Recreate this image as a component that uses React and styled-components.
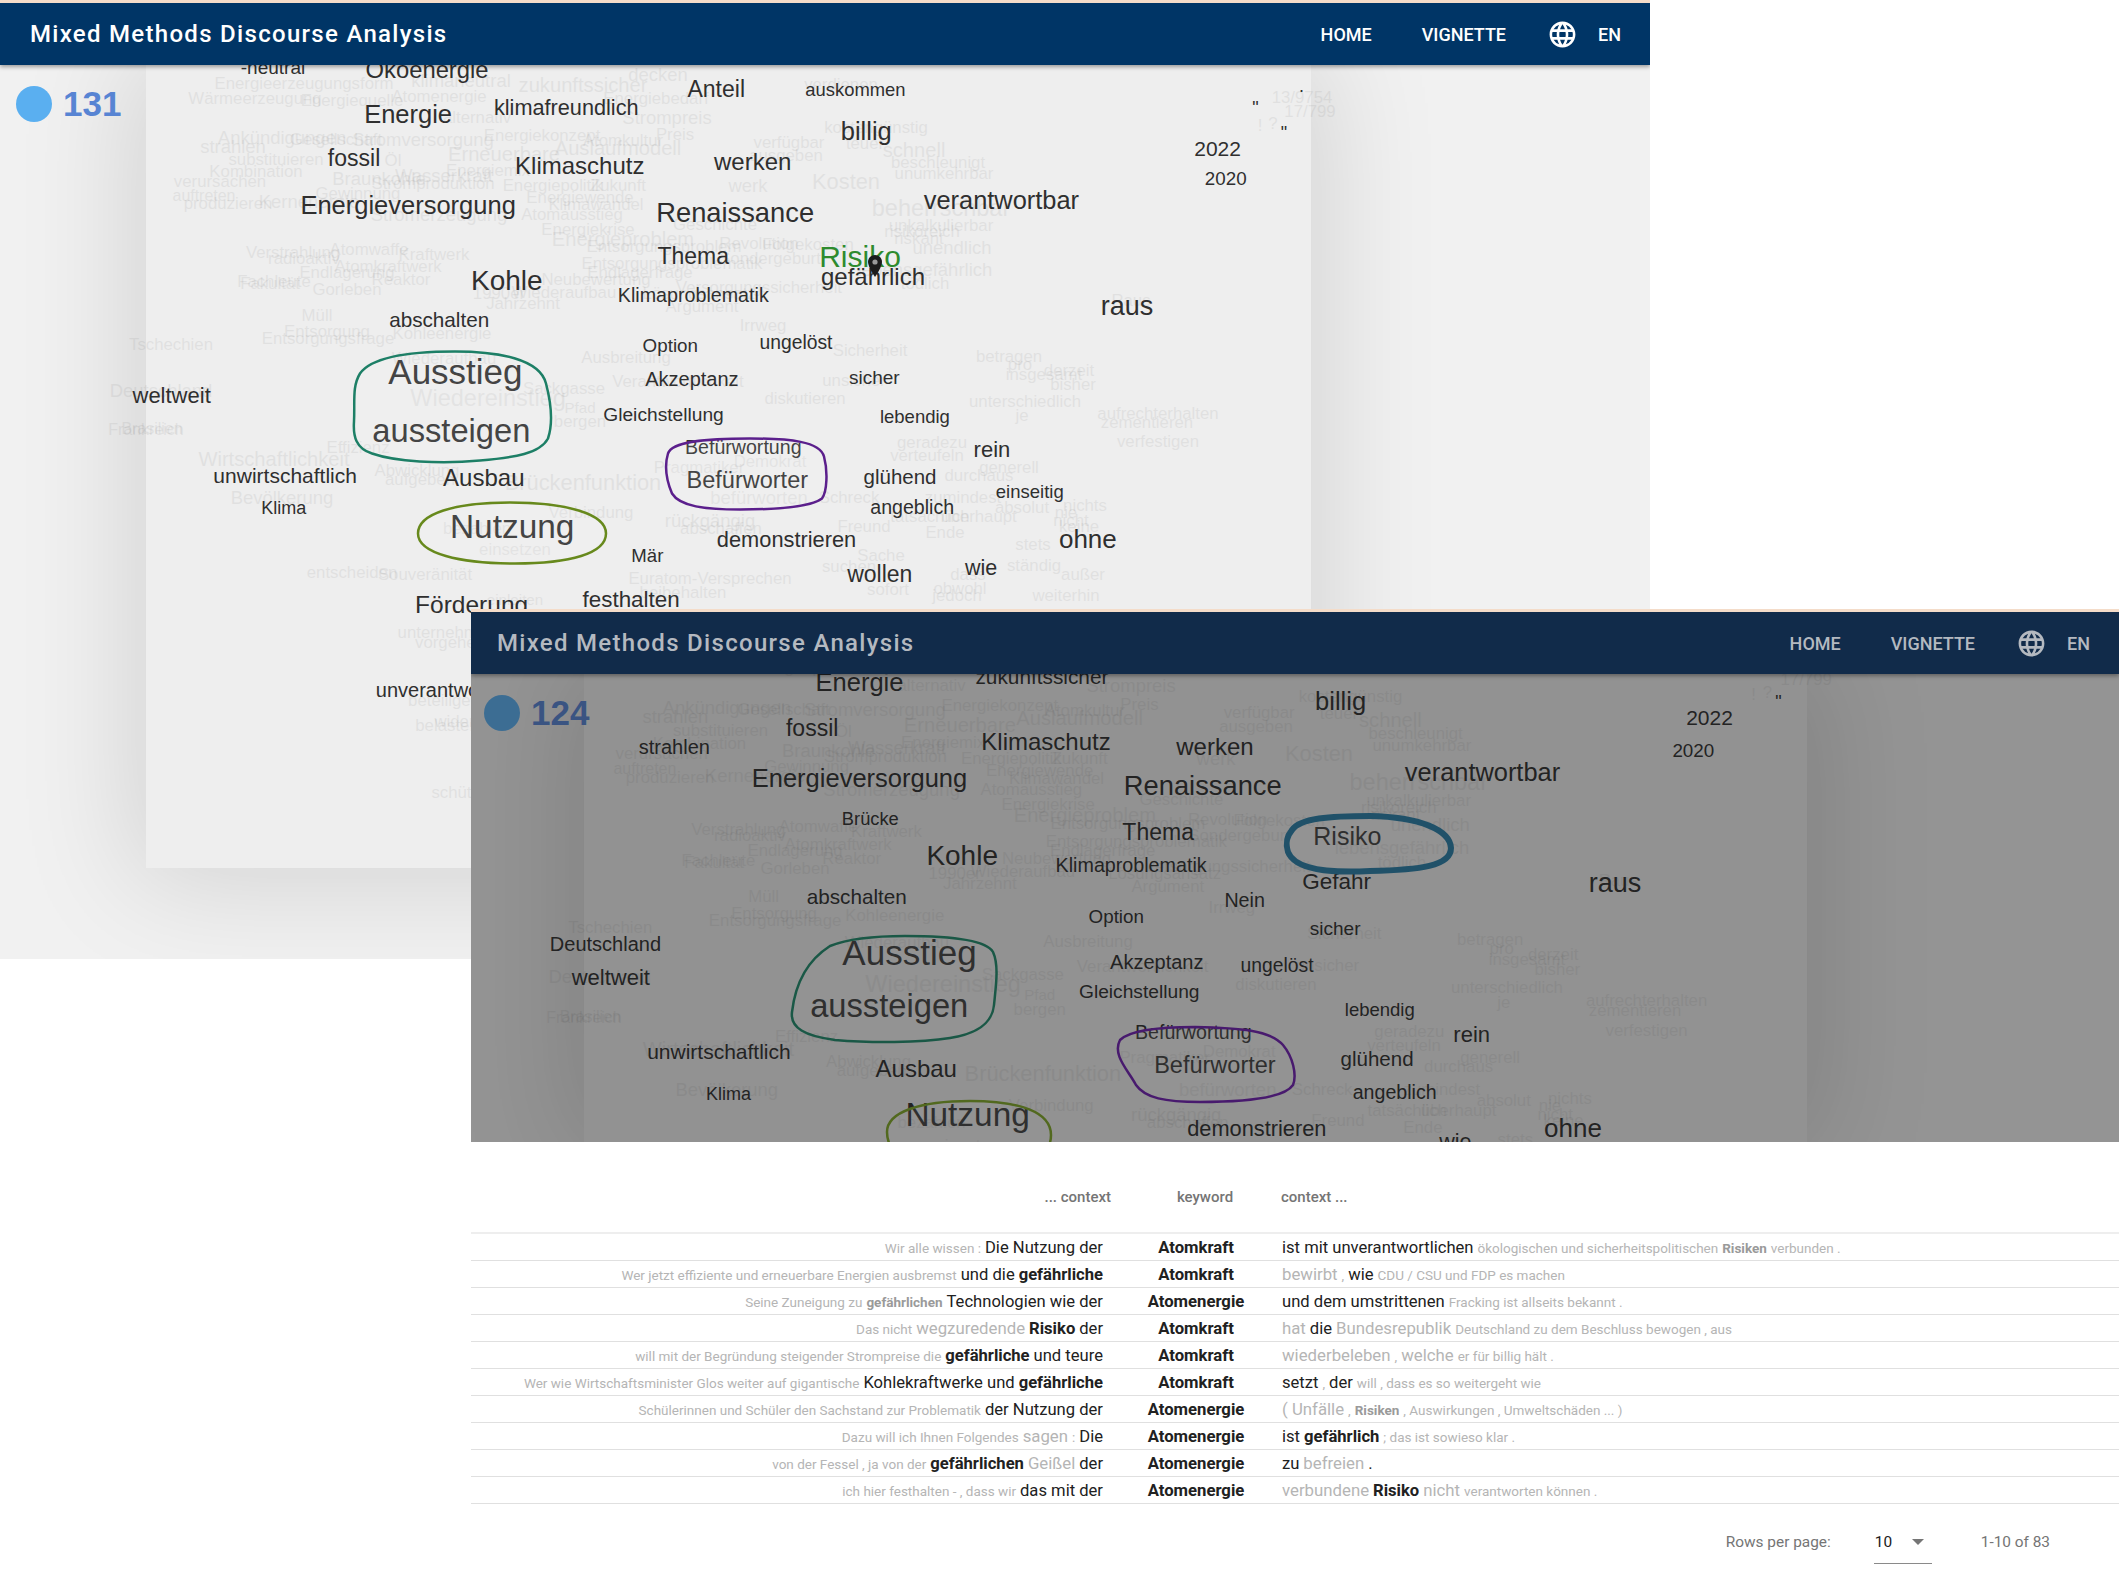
import React from 'react';
import styled, { createGlobalStyle } from 'styled-components';
import { MdLanguage } from 'react-icons/md';

// cloud words were measured on the shrunk screenshot, this brings them back to page pixels
const REF = 2119 / 1568;

const SIZES = {
  '-neutral': 19, Ökoenergie: 23.8, Energie: 25.5, klimafreundlich: 21.7, Anteil: 23, auskommen: 18.4,
  billig: 25.5, fossil: 23, Klimaschutz: 24, werken: 24, Energieversorgung: 25.5, Renaissance: 27.3,
  verantwortbar: 25.4, Thema: 23, Risiko: 25, gefährlich: 24, Klimaproblematik: 19.7, Kohle: 28, raus: 27,
  abschalten: 20.7, Option: 18.8, ungelöst: 19.3, Akzeptanz: 20, sicher: 19, Gleichstellung: 19.2,
  lebendig: 18.5, rein: 22, weltweit: 22, unwirtschaftlich: 21, Ausbau: 24, Klima: 18, Befürwortung: 19.6,
  Befürworter: 23.5, glühend: 20.5, einseitig: 18.5, angeblich: 19.6, demonstrieren: 21.8, ohne: 26,
  wollen: 23, wie: 21.5, Mär: 18.6, Förderung: 24.5, festhalten: 22.4, unverantwortlich: 20, 2022: 21,
  2020: 18.8, Ausstieg: 35, aussteigen: 32.7, Nutzung: 33.4, strahlen: 20, Brücke: 18.3, Gefahr: 22.5,
  Nein: 19.7, Deutschland: 20, zukunftssicher: 20.8, '"': 18, '.': 18,
};

const FRONT_WORDS = [
  ['-neutral', 202, 49], ['Ökoenergie', 316, 51], ['Energie', 302, 84], ['klimafreundlich', 419, 79],
  ['Anteil', 530, 65], ['auskommen', 633, 66], ['billig', 641, 97], ['fossil', 262, 116],
  ['Klimaschutz', 429, 122], ['werken', 557, 119], ['Energieversorgung', 302, 152], ['Renaissance', 544, 157],
  ['verantwortbar', 741, 148], ['Thema', 513, 189], ['gefährlich', 646, 204], ['Klimaproblematik', 513, 218],
  ['Kohle', 375, 207], ['raus', 834, 226], ['abschalten', 325, 236], ['Option', 496, 255], ['ungelöst', 589, 253],
  ['Akzeptanz', 512, 280], ['sicher', 647, 278], ['Gleichstellung', 491, 306], ['lebendig', 677, 308],
  ['rein', 734, 332], ['weltweit', 127, 292], ['unwirtschaftlich', 211, 351], ['Ausbau', 358, 353],
  ['Klima', 210, 375], ['Ausstieg', 337, 274], ['aussteigen', 334, 318], ['Nutzung', 379, 389],
  ['Befürwortung', 550, 331], ['Befürworter', 553, 355], ['glühend', 666, 352], ['einseitig', 762, 363],
  ['angeblich', 675, 375], ['demonstrieren', 582, 399], ['ohne', 805, 398], ['wollen', 651, 424], ['wie', 726, 420],
  ['Mär', 479, 411], ['Förderung', 349, 447], ['festhalten', 467, 443], ['unverantwortlich', 332, 510],
  ['2022', 901, 109], ['2020', 907, 132], ['"', 929, 79], ['"', 950, 98], ['.', 963, 63],
];

const BACK_WORDS = [
  ['Energie', 636, 505], ['zukunftssicher', 771, 500], ['billig', 992, 519], ['2022', 1265, 530], ['2020', 1253, 555],
  ['"', 1316, 519], ['strahlen', 499, 552], ['fossil', 601, 538], ['Klimaschutz', 774, 548], ['werken', 899, 552],
  ['Renaissance', 890, 581], ['verantwortbar', 1097, 571], ['Energieversorgung', 636, 576], ['Brücke', 644, 605],
  ['Thema', 857, 615], ['Risiko', 997, 618], ['Kohle', 712, 633], ['Klimaproblematik', 837, 640], ['Gefahr', 989, 652],
  ['raus', 1195, 653], ['abschalten', 634, 663], ['Nein', 921, 666], ['Option', 826, 678], ['sicher', 988, 686],
  ['Deutschland', 448, 698], ['Ausstieg', 673, 704], ['Akzeptanz', 856, 711], ['ungelöst', 945, 714],
  ['weltweit', 452, 723], ['Gleichstellung', 843, 733], ['aussteigen', 658, 744], ['lebendig', 1021, 747],
  ['Befürwortung', 883, 764], ['rein', 1089, 765], ['unwirtschaftlich', 532, 777], ['glühend', 1019, 783],
  ['Befürworter', 899, 788], ['Ausbau', 678, 790], ['angeblich', 1032, 808], ['Klima', 539, 809], ['Nutzung', 716, 824],
  ['demonstrieren', 930, 835], ['ohne', 1164, 834], ['wie', 1077, 845],
];

// faded words, in page pixels of the front window
const FADED = [
  ['Energieerzeugungsform', 304, 84, 20], ['klimaneutral', 461, 81, 22], ['zukunftssicher', 583, 85, 24], ['decken', 658, 75, 22],
  ['Wärmeerzeugung', 255, 99, 20], ['Energiequelle', 352, 101, 20], ['Atomenergie', 439, 97, 20], ['Energiebedarf', 656, 99, 20],
  ['Strompreis', 667, 118, 22], ['alternativ', 477, 118, 20], ['Preis', 675, 135, 20], ['Energiekonzept', 542, 136, 20],
  ['Ankündigungen', 282, 138, 22], ['Gesellschaft', 336, 140, 20], ['Stromversorgung', 423, 140, 22], ['strahlen', 233, 147, 22],
  ['Auslaufmodell', 618, 148, 24], ['Erneuerbare', 504, 154, 24], ['Atomkultur', 623, 141, 20], ['substituieren', 276, 160, 20],
  ['verfügbar', 789, 143, 20], ['ausgeben', 786, 156, 20], ['Öl', 393, 161, 20], ['Kombination', 256, 172, 20],
  ['Braunkohle', 379, 179, 22], ['Wasserkraft', 444, 176, 22], ['Energiemix', 488, 171, 20], ['verursachen', 220, 182, 20],
  ['Stromproduktion', 433, 184, 20], ['Energiepolitik', 553, 186, 20], ['Zukunft', 618, 186, 20], ['werk', 748, 186, 22],
  ['Kosten', 846, 182, 26], ['auftreten', 204, 196, 19], ['Gewinnung', 358, 194, 20], ['Energiewende', 580, 198, 20],
  ['produzieren', 228, 204, 20], ['Kernenergie', 309, 202, 22], ['Klimawandel', 596, 205, 20], ['Atomausstieg', 572, 215, 20],
  ['Stromerzeugung', 439, 215, 22], ['Geschichte', 715, 225, 20], ['Energiekrise', 588, 230, 20], ['Energieproblem', 623, 239, 24],
  ['Entsorgungsproblem', 664, 247, 20], ['Revolution', 759, 244, 20], ['Folgekosten', 808, 245, 20], ['Verstrahlung', 293, 253, 20],
  ['Atomwaffe', 369, 250, 20], ['radioaktiv', 304, 259, 20], ['Kraftwerk', 434, 255, 20], ['Atomkraftwerk', 388, 267, 20],
  ['Entsorgungsproblematik', 672, 264, 20], ['Sondergeburt', 770, 259, 20], ['Endlagerung', 347, 273, 20], ['Reaktor', 401, 280, 20],
  ['Fachleute', 274, 282, 20], ['Fakultät', 270, 284, 20], ['Neubewertung', 596, 280, 20], ['Endlagerfrage', 640, 273, 20],
  ['Versorgungssicherheit', 759, 288, 20], ['Wiederaufbau', 564, 293, 20], ['1990er', 499, 294, 20], ['Lösungsansatz', 699, 294, 20],
  ['Gorleben', 347, 290, 20], ['Argument', 702, 307, 20], ['Jahrzehnt', 523, 304, 20], ['Müll', 317, 316, 20], ['Irrweg', 763, 326, 20],
  ['Entsorgung', 327, 332, 20], ['Entsorgungsfrage', 328, 339, 20], ['Kohleenergie', 442, 334, 20], ['Tschechien', 171, 345, 20],
  ['Sicherheit', 870, 351, 20], ['Ausbreitung', 626, 358, 20], ['Wiederaufbau', 444, 359, 20], ['Sackgasse', 564, 389, 20],
  ['Deutschland', 161, 391, 22], ['Verantwortlichkeit', 678, 382, 20], ['Wiedereinstieg', 488, 399, 28], ['diskutieren', 805, 399, 20],
  ['Brasilien', 152, 429, 19], ['Frankreich', 146, 430, 19], ['Pfad', 580, 408, 18], ['bergen', 580, 422, 20], ['Wirtschaftlichkeit', 274, 459, 24],
  ['Effizienz', 358, 448, 20], ['Abwicklung', 417, 471, 20], ['aufgeben', 420, 480, 20], ['Brückenfunktion', 583, 483, 26],
  ['Pragmatiker', 699, 468, 20], ['Bevölkerung', 282, 498, 22], ['Demokrat', 770, 462, 20], ['befürworten', 759, 498, 22],
  ['Verbindung', 591, 513, 20], ['rückgängig', 710, 521, 22], ['abschaffen', 721, 529, 20], ['bezahlen', 477, 529, 20],
  ['einsetzen', 515, 550, 20], ['entscheiden', 352, 573, 20], ['Souveränität', 425, 575, 20], ['Euratom-Versprechen', 710, 579, 20],
  ['beibehalten', 683, 593, 20], ['einleiten', 515, 600, 18],
  ['verdienen', 841, 85, 20], ['kostengünstig', 876, 128, 20], ['teuer', 865, 144, 20], ['schnell', 914, 150, 24], ['beschleunigt', 938, 163, 20],
  ['unumkehrbar', 944, 174, 20], ['beherrschbar', 941, 209, 28], ['unkalkulierbar', 941, 226, 20], ['risikoreich', 922, 232, 20],
  ['riskant', 919, 239, 20], ['unendlich', 952, 248, 22], ['lebensgefährlich', 925, 270, 22], ['tödlich', 925, 284, 20], ['Raus', 1131, 301, 20],
  ['betragen', 1009, 357, 20], ['pro', 1020, 365, 20], ['insgesamt', 1044, 375, 20], ['derzeit', 1069, 371, 20], ['bisher', 1073, 385, 20],
  ['unsicher', 854, 381, 20], ['unterschiedlich', 1025, 402, 20], ['je', 1022, 416, 20], ['aufrechterhalten', 1158, 414, 20],
  ['zementieren', 1147, 423, 20], ['verfestigen', 1158, 442, 20], ['geradezu', 932, 443, 20], ['verteufeln', 927, 456, 20], ['generell', 1009, 468, 20],
  ['durchaus', 979, 476, 20], ['zumindest', 963, 498, 20], ['absolut', 1022, 508, 20], ['nichts', 1085, 506, 20], ['nie', 1066, 513, 20],
  ['überhaupt', 979, 517, 20], ['tatsächlich', 930, 517, 20], ['nicht', 1071, 521, 20], ['keine', 1079, 527, 20], ['Freund', 864, 527, 20],
  ['Ende', 945, 533, 20], ['stets', 1033, 545, 20], ['Sache', 881, 556, 20], ['ständig', 1034, 566, 20], ['außer', 1083, 575, 20], ['suchen', 849, 567, 20],
  ['dass', 968, 575, 20], ['sofort', 888, 590, 20], ['obwohl', 960, 589, 20], ['jedoch', 957, 596, 20], ['weiterhin', 1066, 596, 20],
  ['Schreck', 849, 498, 20], ['13/9754', 1302, 98, 20], ['17/799', 1310, 112, 20], ['!', 1260, 126, 20], ['?', 1273, 124, 20],
  ['unternehmen', 447, 633, 20], ['vorgehen', 450, 643, 20], ['beteiligen', 444, 701, 20], ['belasten', 447, 726, 20], ['widerlegen', 475, 722, 20], ['schützen', 465, 793, 20],
];

const FRONT_RINGS = [
  { color: '#1d7f66', width: 2.5, d: 'M360 372C372 355 410 350 455 350C500 350 540 358 546 382C552 405 552 425 548 437C540 452 515 456 480 459C440 463 395 460 372 452C356 447 353 435 354 420C355 400 352 385 360 372Z' },
  { color: '#67891c', width: 2.5, d: 'M418 532C418 512 455 501 510 501C565 501 606 512 606 532C606 552 570 562 515 562C460 562 418 552 418 532Z' },
  { color: '#5b1f8c', width: 2.5, d: 'M668 452C672 440 705 437 750 437C790 437 820 440 824 455C828 470 827 490 822 497C810 506 775 508 740 508C705 508 680 505 672 492C667 480 664 465 668 452Z' },
];

const BACK_RINGS = [
  { color: '#1f8a6c', width: 2.5, d: 'M830 946C850 938 880 936 905 936C940 936 985 938 993 952C999 965 996 985 994 1005C992 1025 975 1034 950 1038C920 1043 870 1043 835 1040C805 1036 790 1028 792 1012C794 995 800 965 830 946Z' },
  { color: '#6f1fb0', width: 2.5, d: 'M1120 1040C1130 1030 1160 1027 1195 1027C1240 1028 1270 1030 1283 1045C1293 1057 1297 1075 1293 1085C1285 1097 1250 1102 1200 1102C1165 1102 1145 1098 1136 1085C1128 1070 1112 1055 1120 1040Z' },
  { color: '#80a828', width: 2.5, d: 'M887 1132C887 1112 920 1101 970 1101C1020 1101 1051 1112 1051 1135C1051 1160 1020 1170 970 1170C920 1170 887 1160 887 1132Z' },
  { color: '#2a7fa8', width: 6, d: 'M1292 830C1300 818 1330 816 1370 816C1420 817 1450 830 1451 848C1451 866 1420 870 1370 871C1330 873 1295 870 1288 852C1285 842 1287 836 1292 830Z' },
];

// s small grey, sb small bold grey, g large grey, d dark, b bold dark
const ROWS = [
  { left: [['s', 'Wir alle wissen :'], ['d', 'Die Nutzung der']], key: 'Atomkraft', right: [['d', 'ist mit unverantwortlichen'], ['s', 'ökologischen und sicherheitspolitischen'], ['sb', 'Risiken'], ['s', 'verbunden .']] },
  { left: [['s', 'Wer jetzt effiziente und erneuerbare Energien ausbremst'], ['d', 'und die'], ['b', 'gefährliche']], key: 'Atomkraft', right: [['g', 'bewirbt'], ['s', ','], ['d', 'wie'], ['s', 'CDU / CSU und FDP es machen']] },
  { left: [['s', 'Seine Zuneigung zu'], ['sb', 'gefährlichen'], ['d', 'Technologien wie der']], key: 'Atomenergie', right: [['d', 'und dem umstrittenen'], ['s', 'Fracking ist allseits bekannt .']] },
  { left: [['s', 'Das nicht'], ['g', 'wegzuredende'], ['b', 'Risiko'], ['d', 'der']], key: 'Atomkraft', right: [['g', 'hat'], ['d', 'die'], ['g', 'Bundesrepublik'], ['s', 'Deutschland zu dem Beschluss bewogen , aus']] },
  { left: [['s', 'will mit der Begründung steigender Strompreise die'], ['b', 'gefährliche'], ['d', 'und teure']], key: 'Atomkraft', right: [['g', 'wiederbeleben'], ['s', ','], ['g', 'welche'], ['s', 'er für billig hält .']] },
  { left: [['s', 'Wer wie Wirtschaftsminister Glos weiter auf gigantische'], ['d', 'Kohlekraftwerke und'], ['b', 'gefährliche']], key: 'Atomkraft', right: [['d', 'setzt'], ['s', ','], ['d', 'der'], ['s', 'will , dass es so weitergeht wie']] },
  { left: [['s', 'Schülerinnen und Schüler den Sachstand zur Problematik'], ['d', 'der Nutzung der']], key: 'Atomenergie', right: [['g', '( Unfälle'], ['s', ','], ['sb', 'Risiken'], ['s', ', Auswirkungen , Umweltschäden ... )']] },
  { left: [['s', 'Dazu will ich Ihnen Folgendes'], ['g', 'sagen'], ['s', ':'], ['d', 'Die']], key: 'Atomenergie', right: [['d', 'ist'], ['b', 'gefährlich'], ['s', '; das ist sowieso klar .']] },
  { left: [['s', 'von der Fessel , ja von der'], ['b', 'gefährlichen'], ['g', 'Geißel'], ['d', 'der']], key: 'Atomenergie', right: [['d', 'zu'], ['g', 'befreien'], ['d', '.']] },
  { left: [['s', 'ich hier festhalten - , dass wir'], ['d', 'das mit der']], key: 'Atomenergie', right: [['g', 'verbundene'], ['b', 'Risiko'], ['g', 'nicht'], ['s', 'verantworten können .']] },
];

const GlobalStyle = createGlobalStyle`
  html, body { margin: 0; padding: 0; background: #fff; }
  #root { position: relative; width: 2119px; height: 1584px; overflow: hidden; font-family: Roboto, sans-serif; }
`;

const Win = styled.section`
  position: absolute;
  left: ${p => p.$left}px;
  top: ${p => p.$top}px;
  width: ${p => p.$width}px;
  height: ${p => p.$height}px;
  display: flex;
  flex-direction: column;
  background: #fff;
  border-top: 3px solid #f4dcc9;
  box-sizing: border-box;
  overflow: hidden;
`;

const AppBar = styled.header`
  position: relative;
  z-index: 3;
  flex: none;
  height: 62px;
  padding: 0 29px 0 30px;
  display: flex;
  align-items: center;
  justify-content: space-between;
  background: ${p => (p.$dim ? '#112b4a' : '#003566')};
  color: ${p => (p.$dim ? '#b4b9c0' : '#fff')};
  box-shadow: 0 2px 4px rgba(0, 0, 0, 0.35);
`;

const Title = styled.div`
  font-size: 24px;
  font-weight: 500;
  letter-spacing: 1.3px;
  margin-left: ${p => (p.$dim ? '-4px' : '0')};
`;

const Nav = styled.nav`
  display: flex;
  align-items: center;
  font-size: 18px;
  font-weight: 500;
`;

const NavLink = styled.span`
  margin-right: ${p => p.$gap}px;
`;

const Globe = styled(MdLanguage)`
  display: block;
  margin-right: 20px;
`;

const Canvas = styled.div`
  position: relative;
  flex: ${p => (p.$dim ? 'none' : '1')};
  height: ${p => (p.$dim ? '468px' : 'auto')};
  overflow: hidden;
  background: #f1f1f1;
`;

const Sheet = styled.div`
  margin-left: ${p => p.$left}px;
  width: ${p => p.$width}px;
  height: ${p => p.$height}px;
  background: #eee;
  box-shadow: 0 0 110px 12px rgba(0, 0, 0, 0.13);
`;

const Word = styled.span.attrs(p => ({
  style: { left: p.$x, top: p.$y, fontSize: p.$size },
}))`
  position: absolute;
  transform: translate(-50%, -50%);
  white-space: nowrap;
  font-family: 'Liberation Sans', Arial, sans-serif;
  line-height: 1;
  color: ${p => p.$color || '#2f2f2f'};
  opacity: ${p => (p.$faded ? 0.065 : 1)};
`;

const Rings = styled.svg`
  position: absolute;
  left: 0;
  top: 0;
  width: 100%;
  height: 100%;
`;

const Pin = styled.svg`
  position: absolute;
  left: 868px;
  top: 190px;
`;

const Count = styled.div`
  position: absolute;
  left: ${p => p.$left}px;
  top: ${p => p.$top}px;
  display: flex;
  align-items: center;
  gap: 11px;
`;

const Dot = styled.span`
  width: 36px;
  height: 36px;
  border-radius: 50%;
  background: #5aaff0;
`;

const CountNum = styled.span`
  font-family: 'Liberation Sans', Arial, sans-serif;
  font-size: 35px;
  font-weight: 700;
  color: #5784d3;
`;

const Dim = styled.div`
  position: absolute;
  inset: 0;
  z-index: 2;
  background: rgba(20, 20, 20, 0.42);
`;

const TablePane = styled.div`
  flex: 1;
  background: #fff;
  color: #212121;
`;

const HeadRow = styled.div`
  display: grid;
  grid-template-columns: 640px 170px 1fr;
  height: 92px;
  align-items: center;
  box-sizing: border-box;
  padding-top: 20px;
  font-size: 15px;
  font-weight: 500;
  color: #757575;
  border-bottom: 2px solid #eee;
`;

const HeadLeft = styled.div`
  text-align: right;
`;

const HeadKey = styled.div`
  text-align: center;
  padding-left: 18px;
`;

const HeadRight = styled.div`
  padding-left: 0;
`;

const Row = styled.div`
  display: grid;
  grid-template-columns: 640px 170px 1fr;
  height: 27.05px;
  align-items: center;
  box-sizing: border-box;
  border-bottom: 1px solid #e0e0e0;
  white-space: nowrap;
`;

const CellLeft = styled.div`
  text-align: right;
  padding-right: 8px;
`;

const CellKey = styled.div`
  text-align: center;
  font-size: 16.7px;
  font-weight: 700;
`;

const CellRight = styled.div`
  padding-left: 1px;
`;

const KIND = {
  s: { size: 13.5, color: '#b5b5b5', weight: 400 },
  sb: { size: 13.5, color: '#9a9a9a', weight: 700 },
  g: { size: 16.8, color: '#b5b5b5', weight: 400 },
  d: { size: 16.6, color: '#212121', weight: 400 },
  b: { size: 16.6, color: '#212121', weight: 700 },
};

const Seg = styled.span`
  font-size: ${p => KIND[p.$kind].size}px;
  color: ${p => KIND[p.$kind].color};
  font-weight: ${p => KIND[p.$kind].weight};
`;

const Pager = styled.div`
  display: flex;
  align-items: center;
  justify-content: flex-end;
  height: 58px;
  margin-top: 9px;
  padding-right: 69px;
  font-size: 15.4px;
  color: #757575;
`;

const PageSelect = styled.div`
  display: flex;
  align-items: center;
  justify-content: space-between;
  width: 58px;
  height: 44px;
  box-sizing: border-box;
  margin: 0 49px 0 43px;
  padding: 0 8px 0 1px;
  color: #212121;
  border-bottom: 1px solid #8a8a8a;
`;

const Caret = styled.span`
  width: 0;
  height: 0;
  border-left: 6px solid transparent;
  border-right: 6px solid transparent;
  border-top: 6px solid #757575;
`;

const Header = ({ dim, links }) => (
  <AppBar $dim={dim}>
    <Title $dim={dim}>Mixed Methods Discourse Analysis</Title>
    <Nav>
      <NavLink $gap={links[0]}>HOME</NavLink>
      <NavLink $gap={links[1]}>VIGNETTE</NavLink>
      <Globe size={31} />
      <span>EN</span>
    </Nav>
  </AppBar>
);

const Faded = ({ mapX, mapY }) =>
  FADED.map(([text, x, y, size], i) => (
    <Word key={i} $faded $x={mapX(x)} $y={mapY(y)} $size={size * 0.84}>{text}</Word>
  ));

const Cloud = ({ words, originX, originY }) =>
  words.map(([text, x, y], i) => (
    <Word key={i} $x={x * REF - originX} $y={y * REF - originY + 1} $size={SIZES[text]}>{text}</Word>
  ));

const RingLayer = ({ rings, box }) => (
  <Rings viewBox={box}>
    {rings.map((r, i) => (
      <path key={i} d={r.d} fill="rgba(255,255,255,0.1)" stroke={r.color} strokeWidth={r.width} />
    ))}
  </Rings>
);

const segs = list =>
  list.map(([kind, text], i) => (
    <React.Fragment key={i}>
      {i > 0 && ' '}
      <Seg $kind={kind}>{text}</Seg>
    </React.Fragment>
  ));

const App = () => (
  <>
    <GlobalStyle />
    <Win $left={0} $top={0} $width={1650} $height={959}>
      <Header links={[50, 41]} />
      <Canvas>
        <Sheet $left={146} $width={1165} $height={803} />
        <Faded mapX={x => x} mapY={y => y - 65} />
        <Cloud words={FRONT_WORDS} originX={0} originY={65} />
        <Word $x={860} $y={192} $size={30} $color="#2e8b2e">Risiko</Word>
        <RingLayer rings={FRONT_RINGS} box="0 65 1650 891" />
        <Pin width="14" height="22" viewBox="0 0 14 22">
          <path d="M7 0C3 0 0 3 0 7c0 5 7 15 7 15s7-10 7-15c0-4-3-7-7-7z" fill="#1c1c1c" />
          <circle cx="7" cy="7" r="2.6" fill="#9a9a9a" />
        </Pin>
        <Count $left={16} $top={19}>
          <Dot />
          <CountNum>131</CountNum>
        </Count>
      </Canvas>
    </Win>
    <Win $left={471} $top={609} $width={1648} $height={975}>
      <Header dim links={[50, 41]} />
      <Canvas $dim>
        <Sheet $left={113} $width={1223} $height={468} />
        <Faded mapX={x => (x - 146) * 1.05 + 113} mapY={y => y * 1.063 + 561 - 674} />
        <Cloud words={BACK_WORDS} originX={471} originY={674} />
        <RingLayer rings={BACK_RINGS} box="471 674 1648 468" />
        <Count $left={13} $top={19}>
          <Dot />
          <CountNum>124</CountNum>
        </Count>
        <Dim />
      </Canvas>
      <TablePane>
        <HeadRow>
          <HeadLeft>... context</HeadLeft>
          <HeadKey>keyword</HeadKey>
          <HeadRight>context ...</HeadRight>
        </HeadRow>
        {ROWS.map((row, i) => (
          <Row key={i}>
            <CellLeft>{segs(row.left)}</CellLeft>
            <CellKey>{row.key}</CellKey>
            <CellRight>{segs(row.right)}</CellRight>
          </Row>
        ))}
        <Pager>
          <span>Rows per page:</span>
          <PageSelect>
            <span>10</span>
            <Caret />
          </PageSelect>
          <span>1-10 of 83</span>
        </Pager>
      </TablePane>
    </Win>
  </>
);

export default App;
